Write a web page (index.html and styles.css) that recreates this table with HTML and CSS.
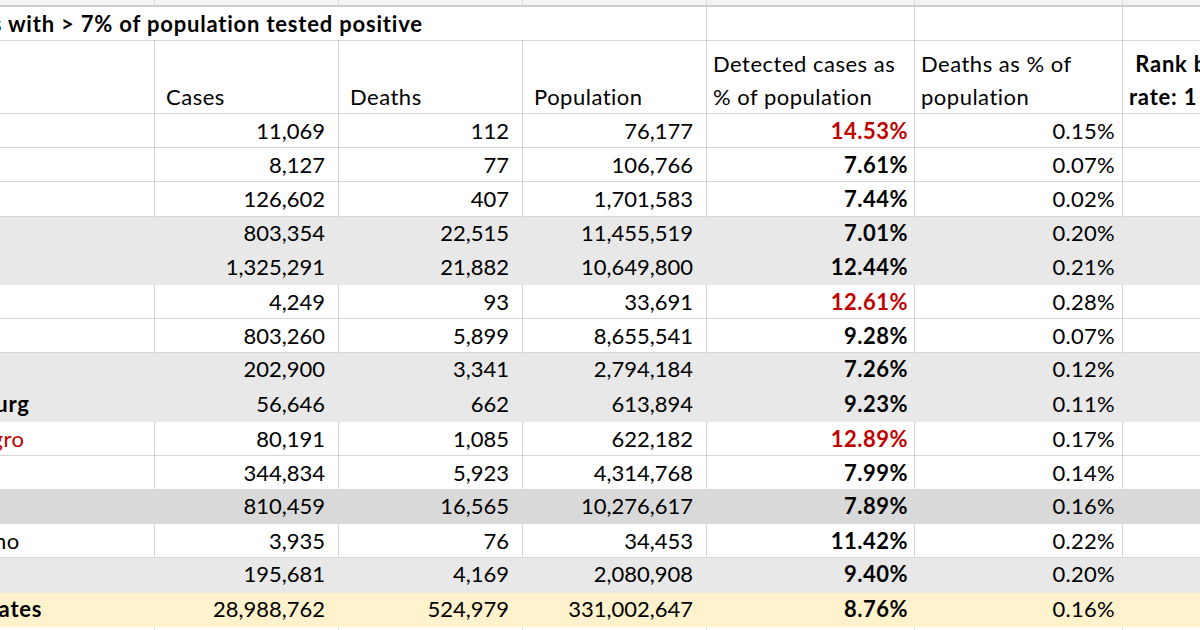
FILE: index.html
```html
<!DOCTYPE html>
<html lang="en">
<head>
<meta charset="utf-8">
<title>Countries with &gt; 7% of population tested positive</title>
<link rel="stylesheet" href="styles.css">
</head>
<body>
<div class="viewport">
  <div class="sheet">
    <div class="row row-top">
      <div class="c"></div><div class="c"></div><div class="c"></div><div class="c"></div><div class="c"></div><div class="c"></div><div class="c"></div>
    </div>
    <div class="row row-title">
      <div class="c title">Countries with &gt; 7% of population tested positive</div>
      <div class="c"></div><div class="c"></div><div class="c"></div>
    </div>
    <div class="row row-head">
      <div class="c head"></div>
      <div class="c head indent">Cases</div>
      <div class="c head indent">Deaths</div>
      <div class="c head indent">Population</div>
      <div class="c head">Detected cases as<br>% of population</div>
      <div class="c head">Deaths as % of<br>population</div>
      <div class="c head rank">&nbsp;Rank by death<br>rate: 1 = highest</div>
    </div>

    <div class="row">
      <div class="c name">Andorra</div><div class="c num">11,069</div><div class="c num">112</div><div class="c num">76,177</div><div class="c pct hi">14.53%</div><div class="c pct2">0.15%</div><div class="c"></div>
    </div>
    <div class="row">
      <div class="c name">Aruba</div><div class="c num">8,127</div><div class="c num">77</div><div class="c num">106,766</div><div class="c pct">7.61%</div><div class="c pct2">0.07%</div><div class="c"></div>
    </div>
    <div class="row">
      <div class="c name">Bahrain</div><div class="c num">126,602</div><div class="c num">407</div><div class="c num">1,701,583</div><div class="c pct">7.44%</div><div class="c pct2">0.02%</div><div class="c"></div>
    </div>
    <div class="row fill">
      <div class="c name">Belgium</div><div class="c num">803,354</div><div class="c num">22,515</div><div class="c num">11,455,519</div><div class="c pct">7.01%</div><div class="c pct2">0.20%</div><div class="c"></div>
    </div>
    <div class="row fill">
      <div class="c name">Czechia</div><div class="c num">1,325,291</div><div class="c num">21,882</div><div class="c num">10,649,800</div><div class="c pct">12.44%</div><div class="c pct2">0.21%</div><div class="c"></div>
    </div>
    <div class="row">
      <div class="c name">Gibraltar</div><div class="c num">4,249</div><div class="c num">93</div><div class="c num">33,691</div><div class="c pct hi">12.61%</div><div class="c pct2">0.28%</div><div class="c"></div>
    </div>
    <div class="row">
      <div class="c name">Israel</div><div class="c num">803,260</div><div class="c num">5,899</div><div class="c num">8,655,541</div><div class="c pct">9.28%</div><div class="c pct2">0.07%</div><div class="c"></div>
    </div>
    <div class="row fill">
      <div class="c name">Lithuania</div><div class="c num">202,900</div><div class="c num">3,341</div><div class="c num">2,794,184</div><div class="c pct">7.26%</div><div class="c pct2">0.12%</div><div class="c"></div>
    </div>
    <div class="row fill">
      <div class="c name strong">Luxembourg</div><div class="c num">56,646</div><div class="c num">662</div><div class="c num">613,894</div><div class="c pct">9.23%</div><div class="c pct2">0.11%</div><div class="c"></div>
    </div>
    <div class="row">
      <div class="c name red">Montenegro</div><div class="c num">80,191</div><div class="c num">1,085</div><div class="c num">622,182</div><div class="c pct hi">12.89%</div><div class="c pct2">0.17%</div><div class="c"></div>
    </div>
    <div class="row">
      <div class="c name">Panama</div><div class="c num">344,834</div><div class="c num">5,923</div><div class="c num">4,314,768</div><div class="c pct">7.99%</div><div class="c pct2">0.14%</div><div class="c"></div>
    </div>
    <div class="row fill dark">
      <div class="c name">Portugal</div><div class="c num">810,459</div><div class="c num">16,565</div><div class="c num">10,276,617</div><div class="c pct">7.89%</div><div class="c pct2">0.16%</div><div class="c"></div>
    </div>
    <div class="row">
      <div class="c name">San Marino</div><div class="c num">3,935</div><div class="c num">76</div><div class="c num">34,453</div><div class="c pct">11.42%</div><div class="c pct2">0.22%</div><div class="c"></div>
    </div>
    <div class="row fill">
      <div class="c name">Slovenia</div><div class="c num">195,681</div><div class="c num">4,169</div><div class="c num">2,080,908</div><div class="c pct">9.40%</div><div class="c pct2">0.20%</div><div class="c"></div>
    </div>
    <div class="row fill total">
      <div class="c name strong">United States</div><div class="c num">28,988,762</div><div class="c num">524,979</div><div class="c num">331,002,647</div><div class="c pct">8.76%</div><div class="c pct2">0.16%</div><div class="c"></div>
    </div>
    <div class="row">
      <div class="c"></div><div class="c"></div><div class="c"></div><div class="c"></div><div class="c"></div><div class="c"></div><div class="c"></div>
    </div>
  </div>
</div>
</body>
</html>
```

FILE: styles.css
```css
* {
  box-sizing: border-box;
}

html,
body {
  margin: 0;
  padding: 0;
  background: #ffffff;
}

body {
  width: 1200px;
  height: 630px;
  overflow: hidden;
  font-family: Lato, "Noto Sans", sans-serif;
  font-size: 22px;
  color: #000000;
}

.viewport {
  width: 1200px;
  height: 630px;
  overflow: hidden;
}

.sheet {
  --cut: 106px;
  margin-left: calc(-1 * var(--cut));
  width: max-content;
}

.row {
  display: grid;
  grid-template-columns: calc(155px + var(--cut)) 184px 184px 184px 208px 208px 260px;
  height: 34.2px;
}

.c {
  border-right: 1px solid #d6d6d6;
  border-bottom: 1px solid #d6d6d6;
  line-height: 33px;
  white-space: nowrap;
  overflow: hidden;
  padding: 0 6px;
}

.row-top {
  height: 7px;
  background: #f4f4f4;
}

.row-top .c {
  border-bottom: 2px solid #cdcdcd;
}

.row-title {
  height: 34px;
}

.title {
  grid-column: span 4;
  font-weight: 700;
  letter-spacing: 0.8px;
  overflow: visible;
}

.row-head {
  height: 73px;
}

.head {
  display: flex;
  flex-direction: column;
  justify-content: flex-end;
  letter-spacing: 0.5px;
}

.head.indent {
  padding-left: 11px;
}

.rank {
  font-weight: 700;
  letter-spacing: 0.8px;
}

.name {
  text-align: left;
  letter-spacing: 0.5px;
  word-spacing: 5px;
}

.name.strong {
  font-weight: 700;
  letter-spacing: 0.8px;
  word-spacing: 0;
}

.red {
  color: #c00000;
}

.num {
  text-align: right;
  padding-right: 13px;
}

.pct {
  text-align: right;
  font-weight: 700;
  letter-spacing: 0.5px;
}

.pct2 {
  text-align: right;
  padding-right: 7px;
  letter-spacing: 0.3px;
}

.hi {
  color: #c00000;
}

.fill {
  margin-top: -1px;
  height: 35.2px;
  background: #e8e8e8;
}

.fill .c {
  border-color: #e8e8e8;
}

.fill.dark {
  background: #d9d9d9;
}

.fill.dark .c {
  border-color: #d9d9d9;
}

.fill.total {
  background: #fff2cc;
}

.fill.total .c {
  border-color: #fff2cc;
}
```
